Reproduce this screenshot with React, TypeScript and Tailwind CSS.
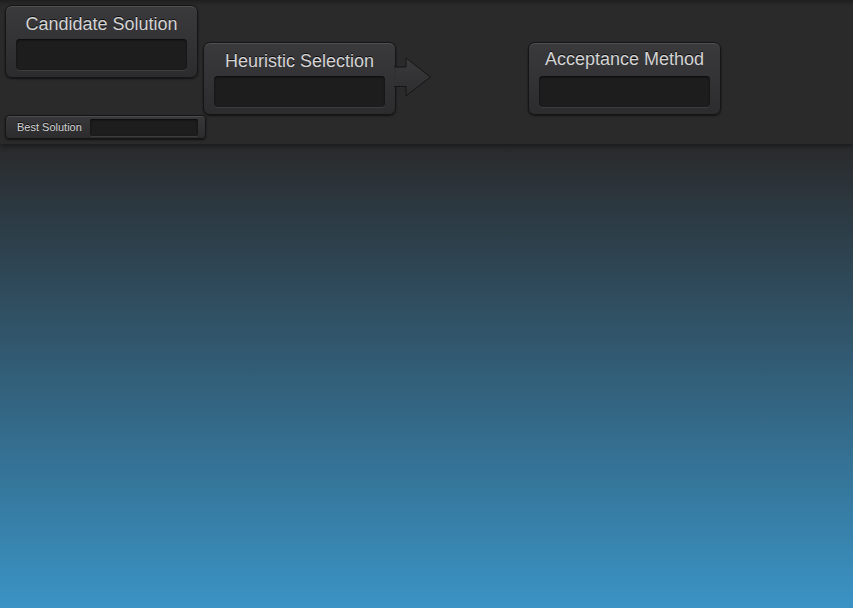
import React from "react"

const font = { fontFamily: '"Liberation Sans", Arial, sans-serif' }

function Node({
  title,
  className,
  titleClass,
}: {
  title: string
  className: string
  titleClass: string
}) {
  return (
    <div
      className={
        "absolute w-[193px] h-[73px] rounded-[7px] border border-[#151515] bg-gradient-to-b from-[#3a3a3d] to-[#2c2c2e] shadow-[inset_0_1px_0_rgba(255,255,255,0.12),0_1px_2px_rgba(0,0,0,0.6)] " +
        className
      }
    >
      <div
        className={
          "text-center text-[18px] leading-none text-[#d4d4d4] [text-shadow:0_-1px_0_rgba(0,0,0,0.8)] " + titleClass
        }
      >
        {title}
      </div>
      <div className="mx-[10px] h-[31px] rounded-[4px] bg-[#1d1d1d] shadow-[inset_0_1px_2px_rgba(0,0,0,0.7),0_1px_0_rgba(255,255,255,0.08)]" />
    </div>
  )
}

export default function App() {
  return (
    <div
      className="min-h-[608px] w-full bg-[linear-gradient(to_bottom,#2a2b2d_0px,#2a2b2d_150px,#3a93c5_608px)]"
      style={font}
    >
      <div className="relative h-[144px] bg-[linear-gradient(to_bottom,#1f1f1f_0px,#2a2a2a_6px,#2a2a2a_100%)] shadow-[0_2px_5px_rgba(0,0,0,0.45)]">
        <Node title="Candidate Solution" className="left-[5px] top-[5px]" titleClass="pt-[9px] pb-[6px]" />
        <Node title="Heuristic Selection" className="left-[203px] top-[42px]" titleClass="pt-[9px] pb-[6px]" />
        <Node title="Acceptance Method" className="left-[528px] top-[42px]" titleClass="pt-[7px] pb-[8px]" />

        {/* arrow out of heuristic selection */}
        <svg className="absolute left-[394px] top-[57px]" width="38" height="40" viewBox="0 0 38 40">
          <defs>
            <linearGradient id="arr" x1="0" y1="0" x2="0" y2="1">
              <stop offset="0" stopColor="#3a3a3d" />
              <stop offset="1" stopColor="#2c2c2e" />
            </linearGradient>
          </defs>
          <polygon
            points="0,10 12,10 12,1 36.5,20 12,39 12,29.5 0,29.5"
            fill="url(#arr)"
            stroke="#151515"
            strokeWidth="1"
          />
          <rect x="0" y="10.5" width="2" height="18.5" fill="#313133" />
        </svg>

        {/* best solution row */}
        <div className="absolute left-[5px] top-[115px] flex h-[24px] w-[201px] items-center rounded-[4px] border border-[#151515] bg-gradient-to-b from-[#38383b] to-[#2c2c2e] pl-[11px] pr-[7px] shadow-[inset_0_1px_0_rgba(255,255,255,0.1),0_1px_2px_rgba(0,0,0,0.6)]">
          <span className="text-[11px] text-[#d4d4d4] [text-shadow:0_-1px_0_rgba(0,0,0,0.8)]">Best Solution</span>
          <div className="ml-auto h-[17px] w-[108px] rounded-[2px] bg-[#1d1d1d] shadow-[inset_0_1px_2px_rgba(0,0,0,0.7),0_1px_0_rgba(255,255,255,0.08)]" />
        </div>
      </div>
    </div>
  )
}
